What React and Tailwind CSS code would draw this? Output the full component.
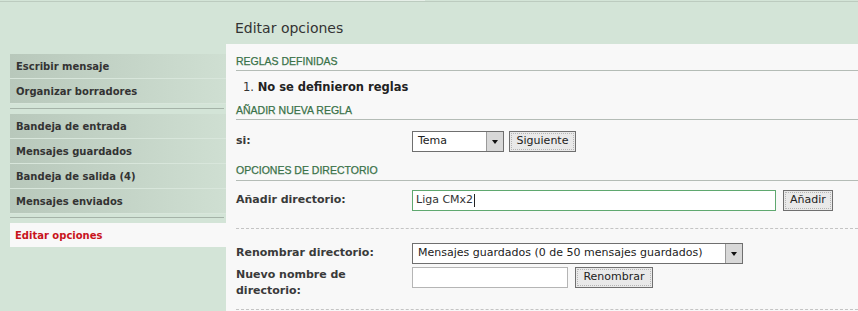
const verdana = { fontFamily: '"DejaVu Sans", Verdana, sans-serif' };

function SideItem({ children, active }) {
  if (active) {
    return (
      <div className="h-[24px] flex items-center pl-[5px] bg-[#f8f8f8] text-[10px] font-bold text-[#c8141c]">
        {children}
      </div>
    );
  }
  return (
    <div className="h-[25px] flex items-center pl-[6px] bg-linear-to-r from-[#b8c8bb] to-[#cfdfd2] border-b border-[#d8e6db] text-[10px] font-bold text-[#333]">
      {children}
    </div>
  );
}

function Heading({ children, className }) {
  return (
    <div
      className={`leading-[14px] border-b border-[#b4bcb6] text-[10.5px] text-[#3a7249] [-webkit-text-stroke:0.25px_#3a7249] ${className}`}
      style={{ fontFamily: '"Liberation Sans", Arial, sans-serif' }}
    >
      {children}
    </div>
  );
}

function Button({ children, className }) {
  return (
    <div className={`h-[21px] border border-[#6f6f6f] bg-[#e9e9e9] p-[1px] ${className}`}>
      <div className="h-full border border-dotted border-[#b5b5b5] flex items-center justify-center text-[11px] text-[#222]">
        {children}
      </div>
    </div>
  );
}

function Select({ value, className }) {
  return (
    <div className={`h-[21px] border border-[#6f6f6f] bg-white flex ${className}`}>
      <div className="flex-1 flex items-center pl-[5px] text-[11px] text-[#222]">{value}</div>
      <div className="w-[17px] border-l border-[#9a9a9a] bg-[#d8d8d8] flex items-center justify-center">
        <div className="w-0 h-0 border-l-[3px] border-r-[3px] border-t-[4px] border-l-transparent border-r-transparent border-t-[#111]" />
      </div>
    </div>
  );
}

export default function App() {
  return (
    <div className="w-[858px] h-[311px] overflow-hidden bg-[#d3e4d7]" style={verdana}>
      {/* top strip */}
      <div className="h-[2px] flex border-b border-[#bccbbf]">
        <div className="w-[300px]" />
        <div className="w-[125px] bg-[#e6efe8]" />
      </div>

      {/* title */}
      <div className="h-[42px] pl-[235px] pt-[17px] text-[14px] leading-[18px] text-[#333]">
        Editar opciones
      </div>

      <div className="flex h-[267px]">
        {/* sidebar */}
        <div className="w-[226px] pl-[10px] pt-[10px]">
          <SideItem>Escribir mensaje</SideItem>
          <SideItem>Organizar borradores</SideItem>
          <div className="mt-[4px] mb-[5px] mr-[2px] border-b border-[#a5b3a8]" />
          <SideItem>Bandeja de entrada</SideItem>
          <SideItem>Mensajes guardados</SideItem>
          <SideItem>Bandeja de salida (4)</SideItem>
          <SideItem>Mensajes enviados</SideItem>
          <div className="mt-[3px] mb-[5px] mr-[2px] border-b border-[#a5b3a8]" />
          <SideItem active>Editar opciones</SideItem>
        </div>

        {/* content */}
        <div className="flex-1 bg-[#f8f8f8] pl-[10px] text-[#333]">
          <Heading className="pt-[10px] pb-[2px]">REGLAS DEFINIDAS</Heading>
          <div className="h-[31px] pt-[9px] pl-[7px] leading-[14px] text-[11.5px]">
            1. <span className="font-bold text-[#222]">No se definieron reglas</span>
          </div>

          <Heading className="pt-[1px] pb-[2px]">AÑADIR NUEVA REGLA</Heading>
          <div className="mt-[10px] flex items-center">
            <div className="w-[176px] text-[11px] font-bold text-[#3a3a3a]">si:</div>
            <Select value="Tema" className="w-[92px] mt-[1px] h-[20px]" />
            <Button className="ml-[5px] w-[67px]">Siguiente</Button>
          </div>

          <Heading className="pt-[11px] pb-[3px]">OPCIONES DE DIRECTORIO</Heading>
          <div className="mt-[9px] flex items-center">
            <div className="w-[176px] text-[11px] font-bold text-[#3a3a3a]">Añadir directorio:</div>
            <div className="w-[364px] h-[21px] border border-[#5fa86f] bg-white flex items-center pl-[3px] text-[11px] text-[#333]">
              Liga CMx2<span className="inline-block w-px h-[13px] bg-[#222] ml-px" />
            </div>
            <Button className="ml-[7px] w-[50px]">Añadir</Button>
          </div>

          <div className="mt-[17px] border-b border-dashed border-[#c4c4c4]" />

          <div className="mt-[14px] flex items-center">
            <div className="w-[176px] text-[11px] font-bold text-[#3a3a3a]">Renombrar directorio:</div>
            <Select value="Mensajes guardados (0 de 50 mensajes guardados)" className="w-[331px]" />
          </div>
          <div className="mt-[3px] flex items-start">
            <div className="w-[176px] text-[11px] leading-[16px] font-bold text-[#3a3a3a]">
              Nuevo nombre de
              <br />
              directorio:
            </div>
            <div className="w-[156px] h-[21px] border border-[#b5b5b5] bg-white" />
            <Button className="ml-[7px] w-[78px]">Renombrar</Button>
          </div>

          <div className="mt-[10px] border-b border-dashed border-[#c4c4c4]" />
        </div>
      </div>
    </div>
  );
}
